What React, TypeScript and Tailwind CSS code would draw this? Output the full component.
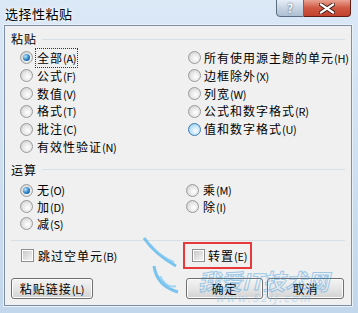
import type { ReactNode } from "react";

const font = { fontFamily: '"Noto Sans CJK SC", "Noto Sans", sans-serif' };

function Radio({ checked, hover }: { checked?: boolean; hover?: boolean }) {
  return (
    <span
      className={`w-[13px] h-[13px] rounded-full border flex items-center justify-center shrink-0 ${
        hover
          ? "border-[#3d7bad] bg-[radial-gradient(circle_at_60%_60%,#ffffff,#c6e7fa_45%,#7ec4ec)]"
          : "border-[#9a9a9a] bg-[radial-gradient(circle_at_60%_60%,#ffffff,#e6e6e6_50%,#c4c4c4)]"
      }`}
    >
      {checked && (
        <span className="w-[7px] h-[7px] rounded-full bg-[radial-gradient(circle_at_35%_35%,#b9e6ff,#2a7fc4_55%,#0c3f78)]" />
      )}
    </span>
  );
}

function Check() {
  return (
    <span className="w-[13px] h-[13px] border border-[#8f8f8f] bg-white flex items-center justify-center shrink-0">
      <span className="w-[9px] h-[9px] bg-linear-to-br from-[#c9c9c9] to-[#f4f4f4]" />
    </span>
  );
}

// label text with the (X) accelerator part kept narrow
function Label({ text, keyName }: { text: string; keyName?: string }) {
  return (
    <span className="whitespace-nowrap leading-[14px]">
      <span className="tracking-[1px]">{text}</span>
      {keyName && <span className="text-[11px] tracking-[-0.3px]">({keyName})</span>}
    </span>
  );
}

function Opt({
  text,
  k,
  checked,
  hover,
  focus,
  gap = "gap-[4px]",
}: {
  text: string;
  k?: string;
  checked?: boolean;
  hover?: boolean;
  focus?: boolean;
  gap?: string;
}) {
  return (
    <div className={`flex items-center ${gap}`}>
      <Radio checked={checked} hover={hover} />
      <span className={focus ? "outline outline-1 outline-dotted outline-[#333] px-px" : ""}>
        <Label text={text} keyName={k} />
      </span>
    </div>
  );
}

function Group({ title }: { title: string }) {
  return (
    <div className="flex items-center h-[14px] pl-[6px] pr-[6px]">
      <span className="leading-[14px] tracking-[1px] mr-[5px]">{title}</span>
      <div className="flex-1 h-px bg-[#d5dfe5]" />
    </div>
  );
}

function Btn({ children, w }: { children: ReactNode; w: string }) {
  return (
    <div
      className={`${w} h-[21px] rounded-[3px] border border-[#707070] bg-linear-to-b from-[#f3f3f3] via-[#e6e6e6] to-[#d2d2d2] shadow-[inset_0_0_0_1px_#fcfcfc] flex items-center justify-center`}
    >
      {children}
    </div>
  );
}

export default function App() {
  return (
    <div
      className="relative w-[358px] h-[313px] overflow-hidden bg-linear-to-b from-[#dbe8f6] via-[#cfe0f2] to-[#c2d6ec] text-[12px] text-black flex flex-col"
      style={font}
    >
      {/* title bar */}
      <div className="h-[25px] flex items-start justify-between pl-[5px] pr-[7px] shrink-0">
        <span className="text-[13px] leading-[13px] mt-[7px] tracking-[0.5px] [text-shadow:0_0_6px_#ffffff,0_0_3px_#ffffff]">
          选择性粘贴
        </span>
        <div className="flex -mt-px">
          <div className="w-[28px] h-[18px] rounded-bl-[4px] border border-[#5b6d82] bg-linear-to-b from-[#e6eef7] via-[#c6d4e3] to-[#aebfd2] flex items-center justify-center text-[#f8fbff] text-[12px] font-bold [text-shadow:0_0_2px_#34455a]">
            ?
          </div>
          <div className="w-[47px] h-[18px] rounded-br-[4px] border border-l-0 border-[#5e1d14] bg-linear-to-b from-[#e8a293] via-[#cf5842] to-[#c2412d] flex items-center justify-center">
            <svg width="16" height="11" viewBox="0 0 16 11">
              <path d="M2 1.5 L14 9.5 M14 1.5 L2 9.5" stroke="#3a1a14" strokeWidth="4" strokeLinecap="square" />
              <path d="M2 1.5 L14 9.5 M14 1.5 L2 9.5" stroke="#ffffff" strokeWidth="2.2" strokeLinecap="square" />
            </svg>
          </div>
        </div>
      </div>

      {/* client area */}
      <div className="ml-[4px] mr-[6px] mb-[7px] flex-1 border border-[#7d8fa5] bg-[#f0f0f0] shadow-[0_0_0_1px_#e8f0f8] flex flex-col pt-[6px]">
        <Group title="粘贴" />
        <div className="grid grid-cols-[168px_1fr] pl-[15px] mt-[3px]">
          <div className="flex flex-col">
            <div className="h-[17.8px] flex items-center">
              <Opt text="全部" k="A" checked focus gap="gap-[3px]" />
            </div>
            <div className="h-[17.8px] flex items-center"><Opt text="公式" k="F" /></div>
            <div className="h-[17.8px] flex items-center"><Opt text="数值" k="V" /></div>
            <div className="h-[17.8px] flex items-center"><Opt text="格式" k="T" /></div>
            <div className="h-[17.8px] flex items-center"><Opt text="批注" k="C" /></div>
            <div className="h-[17.8px] flex items-center"><Opt text="有效性验证" k="N" /></div>
          </div>
          <div className="flex flex-col">
            <div className="h-[17.8px] flex items-center"><Opt text="所有使用源主题的单元" k="H" gap="gap-[3px]" /></div>
            <div className="h-[17.8px] flex items-center"><Opt text="边框除外" k="X" gap="gap-[3px]" /></div>
            <div className="h-[17.8px] flex items-center"><Opt text="列宽" k="W" gap="gap-[3px]" /></div>
            <div className="h-[17.8px] flex items-center"><Opt text="公式和数字格式" k="R" gap="gap-[3px]" /></div>
            <div className="h-[17.8px] flex items-center"><Opt text="值和数字格式" k="U" hover gap="gap-[3px]" /></div>
          </div>
        </div>

        <div className="mt-[7px]">
          <Group title="运算" />
        </div>
        <div className="grid grid-cols-[166px_1fr] pl-[15px] mt-[5px]">
          <div className="flex flex-col">
            <div className="h-[16.8px] flex items-center"><Opt text="无" k="O" checked /></div>
            <div className="h-[16.8px] flex items-center"><Opt text="加" k="D" /></div>
            <div className="h-[16.8px] flex items-center"><Opt text="减" k="S" /></div>
          </div>
          <div className="flex flex-col">
            <div className="h-[16.8px] flex items-center"><Opt text="乘" k="M" /></div>
            <div className="h-[16.8px] flex items-center"><Opt text="除" k="I" /></div>
          </div>
        </div>

        <div className="mt-[8px] mx-[6px] h-px bg-[#d5dfe5]" />

        <div className="mt-px grid grid-cols-[178px_1fr] h-[27px]">
          <div className="flex items-center gap-[4px] pl-[16px]">
            <Check />
            <Label text="跳过空单元" keyName="B" />
          </div>
          <div className="flex items-center">
            <div className="w-[69px] h-[27px] border-2 border-[#e8383a] flex items-center gap-[3px] pl-[7px]">
              <Check />
              <Label text="转置" keyName="E" />
            </div>
          </div>
        </div>

        <div className="mt-[9px] flex items-center pl-[6px] pr-[7px]">
          <Btn w="w-[82px]">
            <Label text="粘贴链接" keyName="L" />
          </Btn>
          <div className="flex-1" />
          <div className="flex gap-[4px]">
            <Btn w="w-[77px]"><span className="tracking-[1px]">确定</span></Btn>
            <Btn w="w-[77px]"><span className="tracking-[1px]">取消</span></Btn>
          </div>
        </div>
      </div>

      {/* watermark overlay */}
      <svg className="absolute left-[140px] top-[236px] pointer-events-none" width="40" height="62" viewBox="0 0 40 62">
        <path d="M4 2 C12 14 22 22 36 30" stroke="#5bb8ee" strokeWidth="3" fill="none" opacity="0.8" />
        <path d="M10 8 C16 16 24 22 34 26" stroke="#7dc8f2" strokeWidth="2" fill="none" opacity="0.7" />
        <path d="M14 30 C16 44 24 52 38 56" stroke="#5bb8ee" strokeWidth="3" fill="none" opacity="0.8" />
        <path d="M20 40 C24 48 30 52 36 50" stroke="#7dc8f2" strokeWidth="2" fill="none" opacity="0.7" />
      </svg>
      <div className="absolute left-[198px] top-[268px] pointer-events-none flex flex-col items-center opacity-45">
        <span className="text-[22px] leading-[24px] font-bold italic text-transparent [-webkit-text-stroke:1px_#3a9be0]">
          我爱IT技术网
        </span>
        <span className="text-[11px] leading-[11px] italic text-[#7cc2ee] tracking-[2px]">www.52ij.com</span>
      </div>
    </div>
  );
}
